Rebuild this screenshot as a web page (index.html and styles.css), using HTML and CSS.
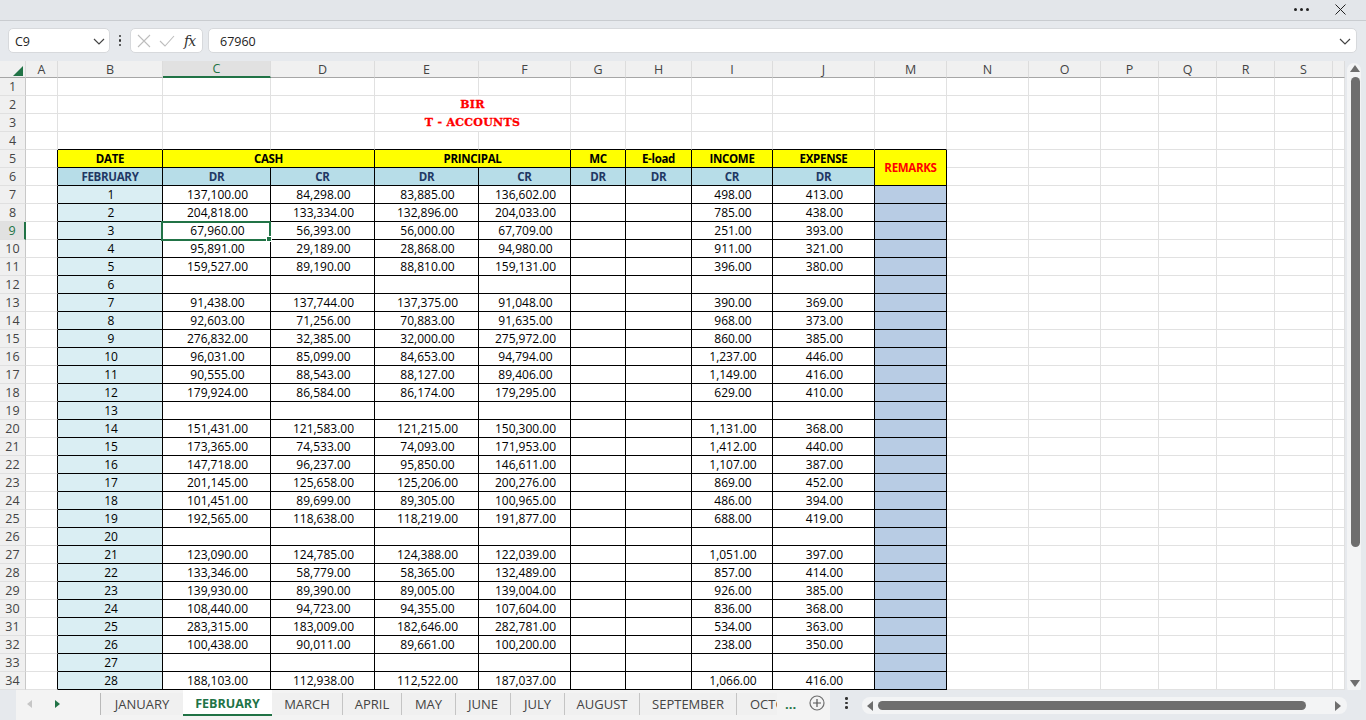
FILE: index.html
```html
<!DOCTYPE html>
<html lang="en">
<head>
<meta charset="utf-8">
<title>T-Accounts</title>
<link rel="stylesheet" href="styles.css">
</head>
<body>
<div class="app">
  <div class="titlebar">
    <span class="more"><i></i><i></i><i></i></span>
    <svg class="close" width="11" height="11" viewBox="0 0 11 11"><path d="M.5.5l10 10M10.5.5l-10 10" stroke="#222" fill="none"/></svg>
  </div>
  <div class="formulabar">
    <div class="box namebox"><span>C9</span><svg width="12" height="7" viewBox="0 0 12 7"><path d="M1 1l5 5 5-5" stroke="#444" stroke-width="1.2" fill="none"/></svg></div>
    <div class="vdots"><i></i><i></i><i></i></div>
    <div class="box fnbox">
      <svg width="14" height="14" viewBox="0 0 14 14"><path d="M1 1l12 12M13 1L1 13" stroke="#bdbdbd" stroke-width="1.1" fill="none"/></svg>
      <svg width="16" height="12" viewBox="0 0 16 12"><path d="M1 6l5 5L15 1" stroke="#bdbdbd" stroke-width="1.1" fill="none"/></svg>
      <span class="fx">fx</span>
    </div>
    <div class="box input"><span>67960</span><svg width="12" height="7" viewBox="0 0 12 7"><path d="M1 1l5 5 5-5" stroke="#444" stroke-width="1.2" fill="none"/></svg></div>
  </div>
  <div class="main">
    <div class="sheet">
      <table>
        <colgroup><col class="c26"><col class="c32"><col class="c105"><col class="c108"><col class="c104"><col class="c104"><col class="c92"><col class="c55"><col class="c66"><col class="c81"><col class="c102"><col class="c72"><col class="c82"><col class="c72"><col class="c58"><col class="c58"><col class="c58"><col class="c58"><col class="c12"></colgroup>
        <tr class="head"><th class="corner"><svg width="10" height="10" viewBox="0 0 10 10"><path d="M10 0v10H0z" fill="#217346"/></svg></th><th>A</th><th>B</th><th class="cur">C</th><th>D</th><th>E</th><th>F</th><th>G</th><th>H</th><th>I</th><th>J</th><th>M</th><th>N</th><th>O</th><th>P</th><th>Q</th><th>R</th><th>S</th><th></th></tr>
        <tr><th>1</th><td></td><td></td><td></td><td></td><td></td><td></td><td></td><td></td><td></td><td></td><td></td><td></td><td></td><td></td><td></td><td></td><td></td><td></td></tr>
        <tr><th>2</th><td></td><td></td><td></td><td></td><td colspan="2" class="title">BIR</td><td></td><td></td><td></td><td></td><td></td><td></td><td></td><td></td><td></td><td></td><td></td><td></td></tr>
        <tr><th>3</th><td></td><td></td><td></td><td></td><td colspan="2" class="title">T - ACCOUNTS</td><td></td><td></td><td></td><td></td><td></td><td></td><td></td><td></td><td></td><td></td><td></td><td></td></tr>
        <tr><th>4</th><td></td><td class="b"></td><td class="b"></td><td class="b"></td><td class="b"></td><td class="b"></td><td class="b"></td><td class="b"></td><td class="b"></td><td class="b"></td><td class="b"></td><td></td><td></td><td></td><td></td><td></td><td></td><td></td></tr>
        <tr class="t"><th>5</th><td class="a"></td><td class="y">DATE</td><td class="y" colspan="2">CASH</td><td class="y" colspan="2">PRINCIPAL</td><td class="y">MC</td><td class="y">E-load</td><td class="y">INCOME</td><td class="y">EXPENSE</td><td class="y red" rowspan="2">REMARKS</td><td class="g"></td><td class="g"></td><td class="g"></td><td class="g"></td><td class="g"></td><td class="g"></td><td class="g"></td></tr>
        <tr class="t"><th>6</th><td class="a"></td><td class="h">FEBRUARY</td><td class="h">DR</td><td class="h">CR</td><td class="h">DR</td><td class="h">CR</td><td class="h">DR</td><td class="h">DR</td><td class="h">CR</td><td class="h">DR</td><td class="g"></td><td class="g"></td><td class="g"></td><td class="g"></td><td class="g"></td><td class="g"></td><td class="g"></td></tr>
        <tr class="t"><th>7</th><td class="a"></td><td class="d">1</td><td>137,100.00</td><td>84,298.00</td><td>83,885.00</td><td>136,602.00</td><td></td><td></td><td>498.00</td><td>413.00</td><td class="r"></td><td class="g"></td><td class="g"></td><td class="g"></td><td class="g"></td><td class="g"></td><td class="g"></td><td class="g"></td></tr>
        <tr class="t"><th>8</th><td class="a"></td><td class="d">2</td><td>204,818.00</td><td>133,334.00</td><td>132,896.00</td><td>204,033.00</td><td></td><td></td><td>785.00</td><td>438.00</td><td class="r"></td><td class="g"></td><td class="g"></td><td class="g"></td><td class="g"></td><td class="g"></td><td class="g"></td><td class="g"></td></tr>
        <tr class="t"><th class="curRow">9</th><td class="a"></td><td class="d">3</td><td class="sel">67,960.00<span class="selbox"><i></i></span></td><td>56,393.00</td><td>56,000.00</td><td>67,709.00</td><td></td><td></td><td>251.00</td><td>393.00</td><td class="r"></td><td class="g"></td><td class="g"></td><td class="g"></td><td class="g"></td><td class="g"></td><td class="g"></td><td class="g"></td></tr>
        <tr class="t"><th>10</th><td class="a"></td><td class="d">4</td><td>95,891.00</td><td>29,189.00</td><td>28,868.00</td><td>94,980.00</td><td></td><td></td><td>911.00</td><td>321.00</td><td class="r"></td><td class="g"></td><td class="g"></td><td class="g"></td><td class="g"></td><td class="g"></td><td class="g"></td><td class="g"></td></tr>
        <tr class="t"><th>11</th><td class="a"></td><td class="d">5</td><td>159,527.00</td><td>89,190.00</td><td>88,810.00</td><td>159,131.00</td><td></td><td></td><td>396.00</td><td>380.00</td><td class="r"></td><td class="g"></td><td class="g"></td><td class="g"></td><td class="g"></td><td class="g"></td><td class="g"></td><td class="g"></td></tr>
        <tr class="t"><th>12</th><td class="a"></td><td class="d">6</td><td></td><td></td><td></td><td></td><td></td><td></td><td></td><td></td><td class="r"></td><td class="g"></td><td class="g"></td><td class="g"></td><td class="g"></td><td class="g"></td><td class="g"></td><td class="g"></td></tr>
        <tr class="t"><th>13</th><td class="a"></td><td class="d">7</td><td>91,438.00</td><td>137,744.00</td><td>137,375.00</td><td>91,048.00</td><td></td><td></td><td>390.00</td><td>369.00</td><td class="r"></td><td class="g"></td><td class="g"></td><td class="g"></td><td class="g"></td><td class="g"></td><td class="g"></td><td class="g"></td></tr>
        <tr class="t"><th>14</th><td class="a"></td><td class="d">8</td><td>92,603.00</td><td>71,256.00</td><td>70,883.00</td><td>91,635.00</td><td></td><td></td><td>968.00</td><td>373.00</td><td class="r"></td><td class="g"></td><td class="g"></td><td class="g"></td><td class="g"></td><td class="g"></td><td class="g"></td><td class="g"></td></tr>
        <tr class="t"><th>15</th><td class="a"></td><td class="d">9</td><td>276,832.00</td><td>32,385.00</td><td>32,000.00</td><td>275,972.00</td><td></td><td></td><td>860.00</td><td>385.00</td><td class="r"></td><td class="g"></td><td class="g"></td><td class="g"></td><td class="g"></td><td class="g"></td><td class="g"></td><td class="g"></td></tr>
        <tr class="t"><th>16</th><td class="a"></td><td class="d">10</td><td>96,031.00</td><td>85,099.00</td><td>84,653.00</td><td>94,794.00</td><td></td><td></td><td>1,237.00</td><td>446.00</td><td class="r"></td><td class="g"></td><td class="g"></td><td class="g"></td><td class="g"></td><td class="g"></td><td class="g"></td><td class="g"></td></tr>
        <tr class="t"><th>17</th><td class="a"></td><td class="d">11</td><td>90,555.00</td><td>88,543.00</td><td>88,127.00</td><td>89,406.00</td><td></td><td></td><td>1,149.00</td><td>416.00</td><td class="r"></td><td class="g"></td><td class="g"></td><td class="g"></td><td class="g"></td><td class="g"></td><td class="g"></td><td class="g"></td></tr>
        <tr class="t"><th>18</th><td class="a"></td><td class="d">12</td><td>179,924.00</td><td>86,584.00</td><td>86,174.00</td><td>179,295.00</td><td></td><td></td><td>629.00</td><td>410.00</td><td class="r"></td><td class="g"></td><td class="g"></td><td class="g"></td><td class="g"></td><td class="g"></td><td class="g"></td><td class="g"></td></tr>
        <tr class="t"><th>19</th><td class="a"></td><td class="d">13</td><td></td><td></td><td></td><td></td><td></td><td></td><td></td><td></td><td class="r"></td><td class="g"></td><td class="g"></td><td class="g"></td><td class="g"></td><td class="g"></td><td class="g"></td><td class="g"></td></tr>
        <tr class="t"><th>20</th><td class="a"></td><td class="d">14</td><td>151,431.00</td><td>121,583.00</td><td>121,215.00</td><td>150,300.00</td><td></td><td></td><td>1,131.00</td><td>368.00</td><td class="r"></td><td class="g"></td><td class="g"></td><td class="g"></td><td class="g"></td><td class="g"></td><td class="g"></td><td class="g"></td></tr>
        <tr class="t"><th>21</th><td class="a"></td><td class="d">15</td><td>173,365.00</td><td>74,533.00</td><td>74,093.00</td><td>171,953.00</td><td></td><td></td><td>1,412.00</td><td>440.00</td><td class="r"></td><td class="g"></td><td class="g"></td><td class="g"></td><td class="g"></td><td class="g"></td><td class="g"></td><td class="g"></td></tr>
        <tr class="t"><th>22</th><td class="a"></td><td class="d">16</td><td>147,718.00</td><td>96,237.00</td><td>95,850.00</td><td>146,611.00</td><td></td><td></td><td>1,107.00</td><td>387.00</td><td class="r"></td><td class="g"></td><td class="g"></td><td class="g"></td><td class="g"></td><td class="g"></td><td class="g"></td><td class="g"></td></tr>
        <tr class="t"><th>23</th><td class="a"></td><td class="d">17</td><td>201,145.00</td><td>125,658.00</td><td>125,206.00</td><td>200,276.00</td><td></td><td></td><td>869.00</td><td>452.00</td><td class="r"></td><td class="g"></td><td class="g"></td><td class="g"></td><td class="g"></td><td class="g"></td><td class="g"></td><td class="g"></td></tr>
        <tr class="t"><th>24</th><td class="a"></td><td class="d">18</td><td>101,451.00</td><td>89,699.00</td><td>89,305.00</td><td>100,965.00</td><td></td><td></td><td>486.00</td><td>394.00</td><td class="r"></td><td class="g"></td><td class="g"></td><td class="g"></td><td class="g"></td><td class="g"></td><td class="g"></td><td class="g"></td></tr>
        <tr class="t"><th>25</th><td class="a"></td><td class="d">19</td><td>192,565.00</td><td>118,638.00</td><td>118,219.00</td><td>191,877.00</td><td></td><td></td><td>688.00</td><td>419.00</td><td class="r"></td><td class="g"></td><td class="g"></td><td class="g"></td><td class="g"></td><td class="g"></td><td class="g"></td><td class="g"></td></tr>
        <tr class="t"><th>26</th><td class="a"></td><td class="d">20</td><td></td><td></td><td></td><td></td><td></td><td></td><td></td><td></td><td class="r"></td><td class="g"></td><td class="g"></td><td class="g"></td><td class="g"></td><td class="g"></td><td class="g"></td><td class="g"></td></tr>
        <tr class="t"><th>27</th><td class="a"></td><td class="d">21</td><td>123,090.00</td><td>124,785.00</td><td>124,388.00</td><td>122,039.00</td><td></td><td></td><td>1,051.00</td><td>397.00</td><td class="r"></td><td class="g"></td><td class="g"></td><td class="g"></td><td class="g"></td><td class="g"></td><td class="g"></td><td class="g"></td></tr>
        <tr class="t"><th>28</th><td class="a"></td><td class="d">22</td><td>133,346.00</td><td>58,779.00</td><td>58,365.00</td><td>132,489.00</td><td></td><td></td><td>857.00</td><td>414.00</td><td class="r"></td><td class="g"></td><td class="g"></td><td class="g"></td><td class="g"></td><td class="g"></td><td class="g"></td><td class="g"></td></tr>
        <tr class="t"><th>29</th><td class="a"></td><td class="d">23</td><td>139,930.00</td><td>89,390.00</td><td>89,005.00</td><td>139,004.00</td><td></td><td></td><td>926.00</td><td>385.00</td><td class="r"></td><td class="g"></td><td class="g"></td><td class="g"></td><td class="g"></td><td class="g"></td><td class="g"></td><td class="g"></td></tr>
        <tr class="t"><th>30</th><td class="a"></td><td class="d">24</td><td>108,440.00</td><td>94,723.00</td><td>94,355.00</td><td>107,604.00</td><td></td><td></td><td>836.00</td><td>368.00</td><td class="r"></td><td class="g"></td><td class="g"></td><td class="g"></td><td class="g"></td><td class="g"></td><td class="g"></td><td class="g"></td></tr>
        <tr class="t"><th>31</th><td class="a"></td><td class="d">25</td><td>283,315.00</td><td>183,009.00</td><td>182,646.00</td><td>282,781.00</td><td></td><td></td><td>534.00</td><td>363.00</td><td class="r"></td><td class="g"></td><td class="g"></td><td class="g"></td><td class="g"></td><td class="g"></td><td class="g"></td><td class="g"></td></tr>
        <tr class="t"><th>32</th><td class="a"></td><td class="d">26</td><td>100,438.00</td><td>90,011.00</td><td>89,661.00</td><td>100,200.00</td><td></td><td></td><td>238.00</td><td>350.00</td><td class="r"></td><td class="g"></td><td class="g"></td><td class="g"></td><td class="g"></td><td class="g"></td><td class="g"></td><td class="g"></td></tr>
        <tr class="t"><th>33</th><td class="a"></td><td class="d">27</td><td></td><td></td><td></td><td></td><td></td><td></td><td></td><td></td><td class="r"></td><td class="g"></td><td class="g"></td><td class="g"></td><td class="g"></td><td class="g"></td><td class="g"></td><td class="g"></td></tr>
        <tr class="t"><th>34</th><td class="a"></td><td class="d">28</td><td>188,103.00</td><td>112,938.00</td><td>112,522.00</td><td>187,037.00</td><td></td><td></td><td>1,066.00</td><td>416.00</td><td class="r"></td><td class="g"></td><td class="g"></td><td class="g"></td><td class="g"></td><td class="g"></td><td class="g"></td><td class="g"></td></tr>
      </table>
    </div>
    <div class="vscroll">
      <svg width="10" height="7" viewBox="0 0 10 7"><path d="M5 0l5 7H0z" fill="#6e6e6e"/></svg>
      <div class="vthumb"></div>
      <svg class="vdown" width="10" height="7" viewBox="0 0 10 7"><path d="M5 7L0 0h10z" fill="#6e6e6e"/></svg>
    </div>
  </div>
  <div class="tabbar">
    <div class="tabnav">
      <svg width="5" height="8" viewBox="0 0 5 8"><path d="M5 0v8L0 4z" fill="#c6c6c6"/></svg>
      <svg width="5" height="8" viewBox="0 0 5 8"><path d="M0 0v8l5-4z" fill="#217346"/></svg>
    </div>
    <div class="tabs">
      <span class="tab w-jan">JANUARY</span>
      <span class="tab active">FEBRUARY</span>
      <span class="tab w-mar">MARCH</span>
      <span class="tab w-apr">APRIL</span>
      <span class="tab w-may">MAY</span>
      <span class="tab w-jun">JUNE</span>
      <span class="tab w-jul">JULY</span>
      <span class="tab w-aug">AUGUST</span>
      <span class="tab w-sep">SEPTEMBER</span>
      <span class="tab w-oct">OCTOBER</span>
      <span class="ellipsis">...</span>
      <svg class="plus" width="16" height="16" viewBox="0 0 16 16"><circle cx="8" cy="8" r="7" fill="none" stroke="#6e6e6e" stroke-width="1.2"/><path d="M8 4v8M4 8h8" stroke="#555" stroke-width="1.2"/></svg>
    </div>
    <div class="vdots tabdots"><i></i><i></i><i></i></div>
    <div class="hscroll">
      <svg width="6" height="10" viewBox="0 0 6 10"><path d="M0 5l6-5v10z" fill="#6e6e6e"/></svg>
      <div class="hthumb"></div>
      <svg width="6" height="10" viewBox="0 0 6 10"><path d="M6 5L0 0v10z" fill="#6e6e6e"/></svg>
    </div>
  </div>
</div>
</body>
</html>
```
FILE: styles.css
```css
* { box-sizing: border-box; }
html, body { margin: 0; height: 100%; overflow: hidden; }
body { font-family: "Open Sans", "Noto Sans", sans-serif; color: #111; background: #e6e9ed; }
.app { width: 1366px; height: 720px; display: flex; flex-direction: column; }

.titlebar { height: 21px; background: #e3e6ea; border-bottom: 1px solid #c9ccd0; box-shadow: 0 1px 2px rgba(0,0,0,.08); display: flex; align-items: center; justify-content: flex-end; gap: 26px; padding: 0 20px 1px 0; }
.more { display: flex; gap: 3px; margin-top: -1px; }
.more i { width: 3px; height: 3px; border-radius: 50%; background: #222; }

.formulabar { height: 40px; flex: none; background: #e6e9ed; display: flex; align-items: center; padding: 0 9px 1px 8px; }
.box { height: 25px; padding-top: 1px; background: #fff; border: 1px solid #d7d9dc; border-radius: 5px; display: flex; align-items: center; font-size: 12.5px; color: #222; }
.namebox { width: 102px; padding: 1px 4px 0 6px; justify-content: space-between; }
.vdots { display: flex; flex-direction: column; gap: 2px; width: 20px; align-items: center; }
.vdots i { width: 2.5px; height: 2.5px; background: #333; border-radius: 50%; }
.fnbox { width: 73px; padding: 1px 4px 0 6px; gap: 8px; }
.fx { font-family: "DejaVu Serif", serif; font-style: italic; font-size: 14px; margin-left: 1px; letter-spacing: -1px; color: #333; }
.input { flex: 1; margin-left: 5px; padding: 1px 5px 0 11px; justify-content: space-between; }

.main { flex: 1; display: flex; min-height: 0; }
.sheet { width: 1345px; height: 629px; overflow: hidden; background: #fff; position: relative; }
.vscroll { width: 21px; display: flex; flex-direction: column; align-items: center; background: #e6e9ed; position: relative; padding-top: 4px; }
.vscroll::before { content: ""; position: absolute; left: 2px; right: 5px; top: 2px; bottom: -4px; background: #f3f4f5; border-radius: 7px; z-index: 0; }
.vscroll > * { position: relative; z-index: 1; margin-right: 1px; }
.vthumb { width: 9px; height: 470px; margin-top: 5px; background: #6e6e6e; border-radius: 5px; }
.vdown { margin-top: 133px; }

table { border-collapse: separate; border-spacing: 0; table-layout: fixed; width: 1345px; font-size: 12px; color: #000; }
.c26 { width: 26px; } .c32 { width: 32px; } .c105 { width: 105px; } .c108 { width: 108px; } .c104 { width: 104px; } .c92 { width: 92px; } .c55 { width: 55px; } .c66 { width: 66px; } .c81 { width: 81px; } .c102 { width: 102px; } .c72 { width: 72px; } .c82 { width: 82px; } .c58 { width: 58px; } .c12 { width: 12px; }
tr { height: 18px; }
th, td { padding: 1px 0 0; height: 18px; line-height: 16px; text-align: center; white-space: nowrap; overflow: hidden; }
td { padding-left: 2px; border-right: 1px solid #e1e1e1; border-bottom: 1px solid #e1e1e1; }
th { background: #f0f0f0; font-weight: 400; color: #444; font-size: 12.5px; border-right: 1px solid #c8c8c8; border-bottom: 1px solid #e0e0e0; }
.head, .head th { height: 17px; }
.head th { padding-top: 0; line-height: 15px; border-right: 1px solid #dcdcdc; border-bottom: 1px solid #a6a6a6; }
.head .cur { background: #e1e1e1; color: #217346; border-bottom: 2px solid #217346; }
.corner svg { display: block; margin: 3px 0 0 13px; }
.curRow { background: #e1e1e1; color: #217346; border-right: 2px solid #217346; }

td.b { border-bottom-color: #000; }
.t td { border-right-color: #000; border-bottom-color: #000; }
.t td.a { border-bottom-color: #e1e1e1; }
.t td.g { border-color: #e1e1e1; }
.title { padding-left: 0; color: #f00; font-family: "DejaVu Serif", serif; font-weight: 700; font-size: 11px; letter-spacing: .3px; -webkit-text-stroke: .3px #f00; }
.y { padding-left: 0; background: #ff0; font-weight: 700; font-size: 11.5px; letter-spacing: -.3px; }
.red { color: #f00; }
.h { padding-left: 0; background: #b7dde8; color: #1f3864; font-weight: 700; font-size: 11.5px; letter-spacing: -.3px; }
.d { background: #daeef3; }
.r { background: #b8cce4; }
td.sel { position: relative; overflow: visible; }
.selbox { position: absolute; left: -2px; top: -1px; width: 110px; height: 20px; border: 2px solid #217346; z-index: 2; }
.selbox i { position: absolute; right: -3px; bottom: -3px; width: 6px; height: 6px; background: #217346; border: 1px solid #fff; }

.tabbar { height: 30px; flex: none; display: flex; align-items: flex-start; background: #e6e9ed; position: relative; }
.tabnav { height: 30px; margin-left: 16px; width: 84px; background: #f3f3f3; display: flex; align-items: center; gap: 23px; padding: 0 0 2px 11px; }
.tabs { width: 730px; height: 30px; background: #f3f3f3; display: flex; align-items: flex-start; overflow: hidden; flex: none; position: relative; }
.tab { height: 22px; margin-top: 3px; font-size: 13px; line-height: 22px; text-align: center; color: #444; background: #f0f0f0; border-right: 1px solid #c4c4c4; flex: none; }
.w-jan { width: 83px; border-left: 1px solid #b9b9b9; border-right: 0; } .w-mar { width: 71px; } .w-apr { width: 59px; } .w-may { width: 54px; } .w-jun { width: 55px; } .w-jul { width: 54px; } .w-aug { width: 75px; } .w-sep { width: 97px; }
.w-oct { width: 40px; padding-left: 13px; text-align: left; border: 0; overflow: hidden; }
.active { width: 89px; height: 26px; margin-top: 0; background: #fff; color: #217346; font-weight: 700; font-size: 12.5px; line-height: 28px; border-bottom: 2px solid #217346; border-right: 0; }
.ellipsis { position: absolute; left: 677px; top: 3px; width: 22px; height: 24px; line-height: 22px; background: #f3f3f3; color: #217346; font-weight: 700; font-size: 13px; padding-left: 8px; }
.plus { position: absolute; left: 709px; top: 5px; }
.tabdots { width: 32px; margin-top: 7px; padding-left: 1px; }
.hscroll { width: 485px; height: 17px; margin-top: 7px; background: #f3f4f5; border-radius: 8px; display: flex; align-items: center; padding: 0 5px; gap: 5px; }
.hthumb { width: 428px; height: 9px; background: #6e6e6e; border-radius: 5px; margin-right: 24px; }
```
